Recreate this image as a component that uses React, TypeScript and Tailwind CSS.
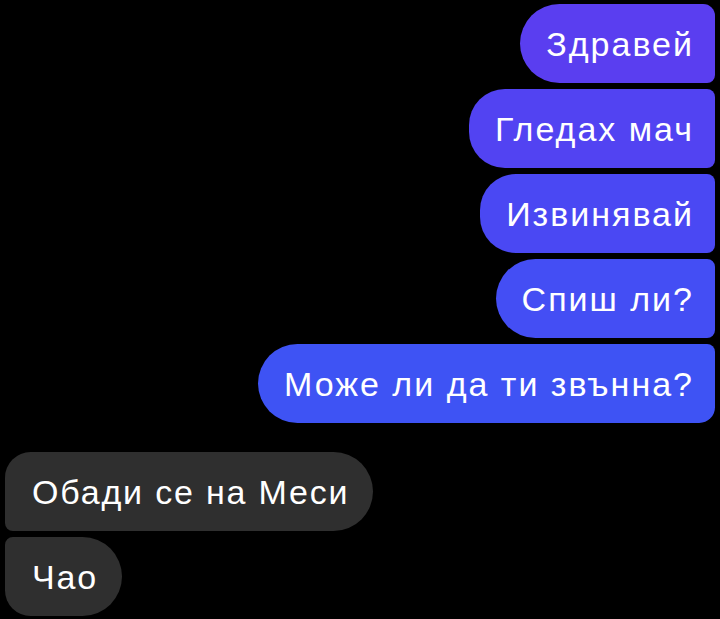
const FONT = { fontFamily: '"Liberation Sans", Arial, sans-serif' }

type Msg = { text: string; cls: string }

const mine: Msg[] = [
  { text: 'Здравей', cls: 'bg-[#5a3ef0] rounded-l-[40px] rounded-tr-[12px] rounded-br-[8px]' },
  { text: 'Гледах мач', cls: 'bg-[#5243f2] rounded-l-[36px] rounded-r-[8px]' },
  { text: 'Извинявай', cls: 'bg-[#4a48f3] rounded-l-[36px] rounded-r-[8px]' },
  { text: 'Спиш ли?', cls: 'bg-[#444ef4] rounded-l-[40px] rounded-r-[8px]' },
  { text: 'Може ли да ти звънна?', cls: 'bg-[#3e53f4] rounded-l-[40px] rounded-tr-[8px] rounded-br-[16px]' },
]

const theirs: Msg[] = [
  { text: 'Обади се на Меси', cls: 'rounded-tl-[26px] rounded-bl-[8px] rounded-r-[40px]' },
  { text: 'Чао', cls: 'rounded-tl-[8px] rounded-bl-[26px] rounded-r-[40px]' },
]

export default function App() {
  return (
    <div className="w-[720px] h-[619px] bg-black overflow-hidden flex flex-col gap-[6px] pt-[4px] text-white" style={FONT}>
      {mine.map(m => (
        <div key={m.text} className="flex justify-end pr-[5px]">
          <div className={`h-[79px] flex items-center pl-[26px] pr-[21px] text-[34px] tracking-[2px] leading-none ${m.cls}`}>
            {m.text}
          </div>
        </div>
      ))}
      <div className="h-[17px] shrink-0" />
      {theirs.map(m => (
        <div key={m.text} className="flex justify-start pl-[5px]">
          <div className={`h-[79px] flex items-center pl-[27px] pr-[24px] text-[34px] tracking-[1.8px] leading-none bg-[#2f2f2f] ${m.cls}`}>
            {m.text}
          </div>
        </div>
      ))}
    </div>
  )
}
